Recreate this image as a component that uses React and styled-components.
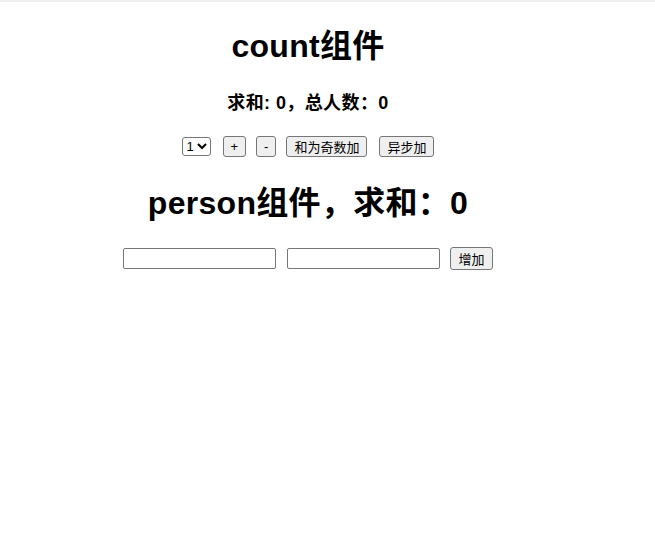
import React, { useState } from 'react'
import styled, { createGlobalStyle } from 'styled-components'

const GlobalStyle = createGlobalStyle`
    html, body {
        margin: 0;
        padding: 0;
        background: #fff;
    }
    body {
        border-top: 2px solid #efefef;
        font-family: "Liberation Sans", "Noto Sans CJK SC", sans-serif;
        color: #000;
    }
`

const Page = styled.div`
    width: 616px;
    display: flex;
    flex-direction: column;
    align-items: center;
    padding-top: 26px;
`

const Title = styled.h2`
    margin: 0;
    font-size: 32px;
    line-height: 36px;
    font-weight: bold;
    letter-spacing: 0.3px;
    margin-bottom: ${props => props.gap || 0}px;
`

const Sum = styled.h4`
    margin: 0;
    font-size: 18px;
    line-height: 24px;
    font-weight: bold;
    letter-spacing: 0.4px;
    margin-bottom: 21px;
`

const Row = styled.div`
    display: flex;
    align-items: center;
    gap: ${props => props.gap || 10}px;
    margin-bottom: ${props => props.bottom || 0}px;
`

const Select = styled.select`
    font-family: "Liberation Sans", "Noto Sans CJK SC", sans-serif;
    font-size: 13px;
    width: 29px;
    height: 19px;
    padding: 0;
    border: 1px solid #767676;
    border-radius: 3px;
    background: #fff;
    margin-right: 2px;
`

const Button = styled.button`
    font-family: "Liberation Sans", "Noto Sans CJK SC", sans-serif;
    font-size: 13px;
    height: ${props => props.tall ? 23 : 21}px;
    padding: 0 7px;
    border: 1px solid #767676;
    border-radius: 3px;
    background: #efefef;
    color: #000;
    margin-left: ${props => props.left || 0}px;
`

const Input = styled.input`
    width: 153px;
    height: 21px;
    box-sizing: border-box;
    border: 1px solid #767676;
    border-radius: 2px;
    padding: 1px 2px;
`

export default function App() {
    const [count] = useState(0)
    const [persons] = useState([])

    return (
        <Page>
            <GlobalStyle />
            <Title gap={27}>count组件</Title>
            <Sum>求和: {count}，总人数：{persons.length}</Sum>
            <Row bottom={28}>
                <Select defaultValue="1">
                    <option value="1">1</option>
                    <option value="2">2</option>
                    <option value="3">3</option>
                </Select>
                <Button>+</Button>
                <Button>-</Button>
                <Button>和为奇数加</Button>
                <Button left={2}>异步加</Button>
            </Row>
            <Title gap={26}>person组件，求和：{count}</Title>
            <Row gap={11}>
                <Input />
                <Input />
                <Button tall left={-1}>增加</Button>
            </Row>
        </Page>
    )
}
